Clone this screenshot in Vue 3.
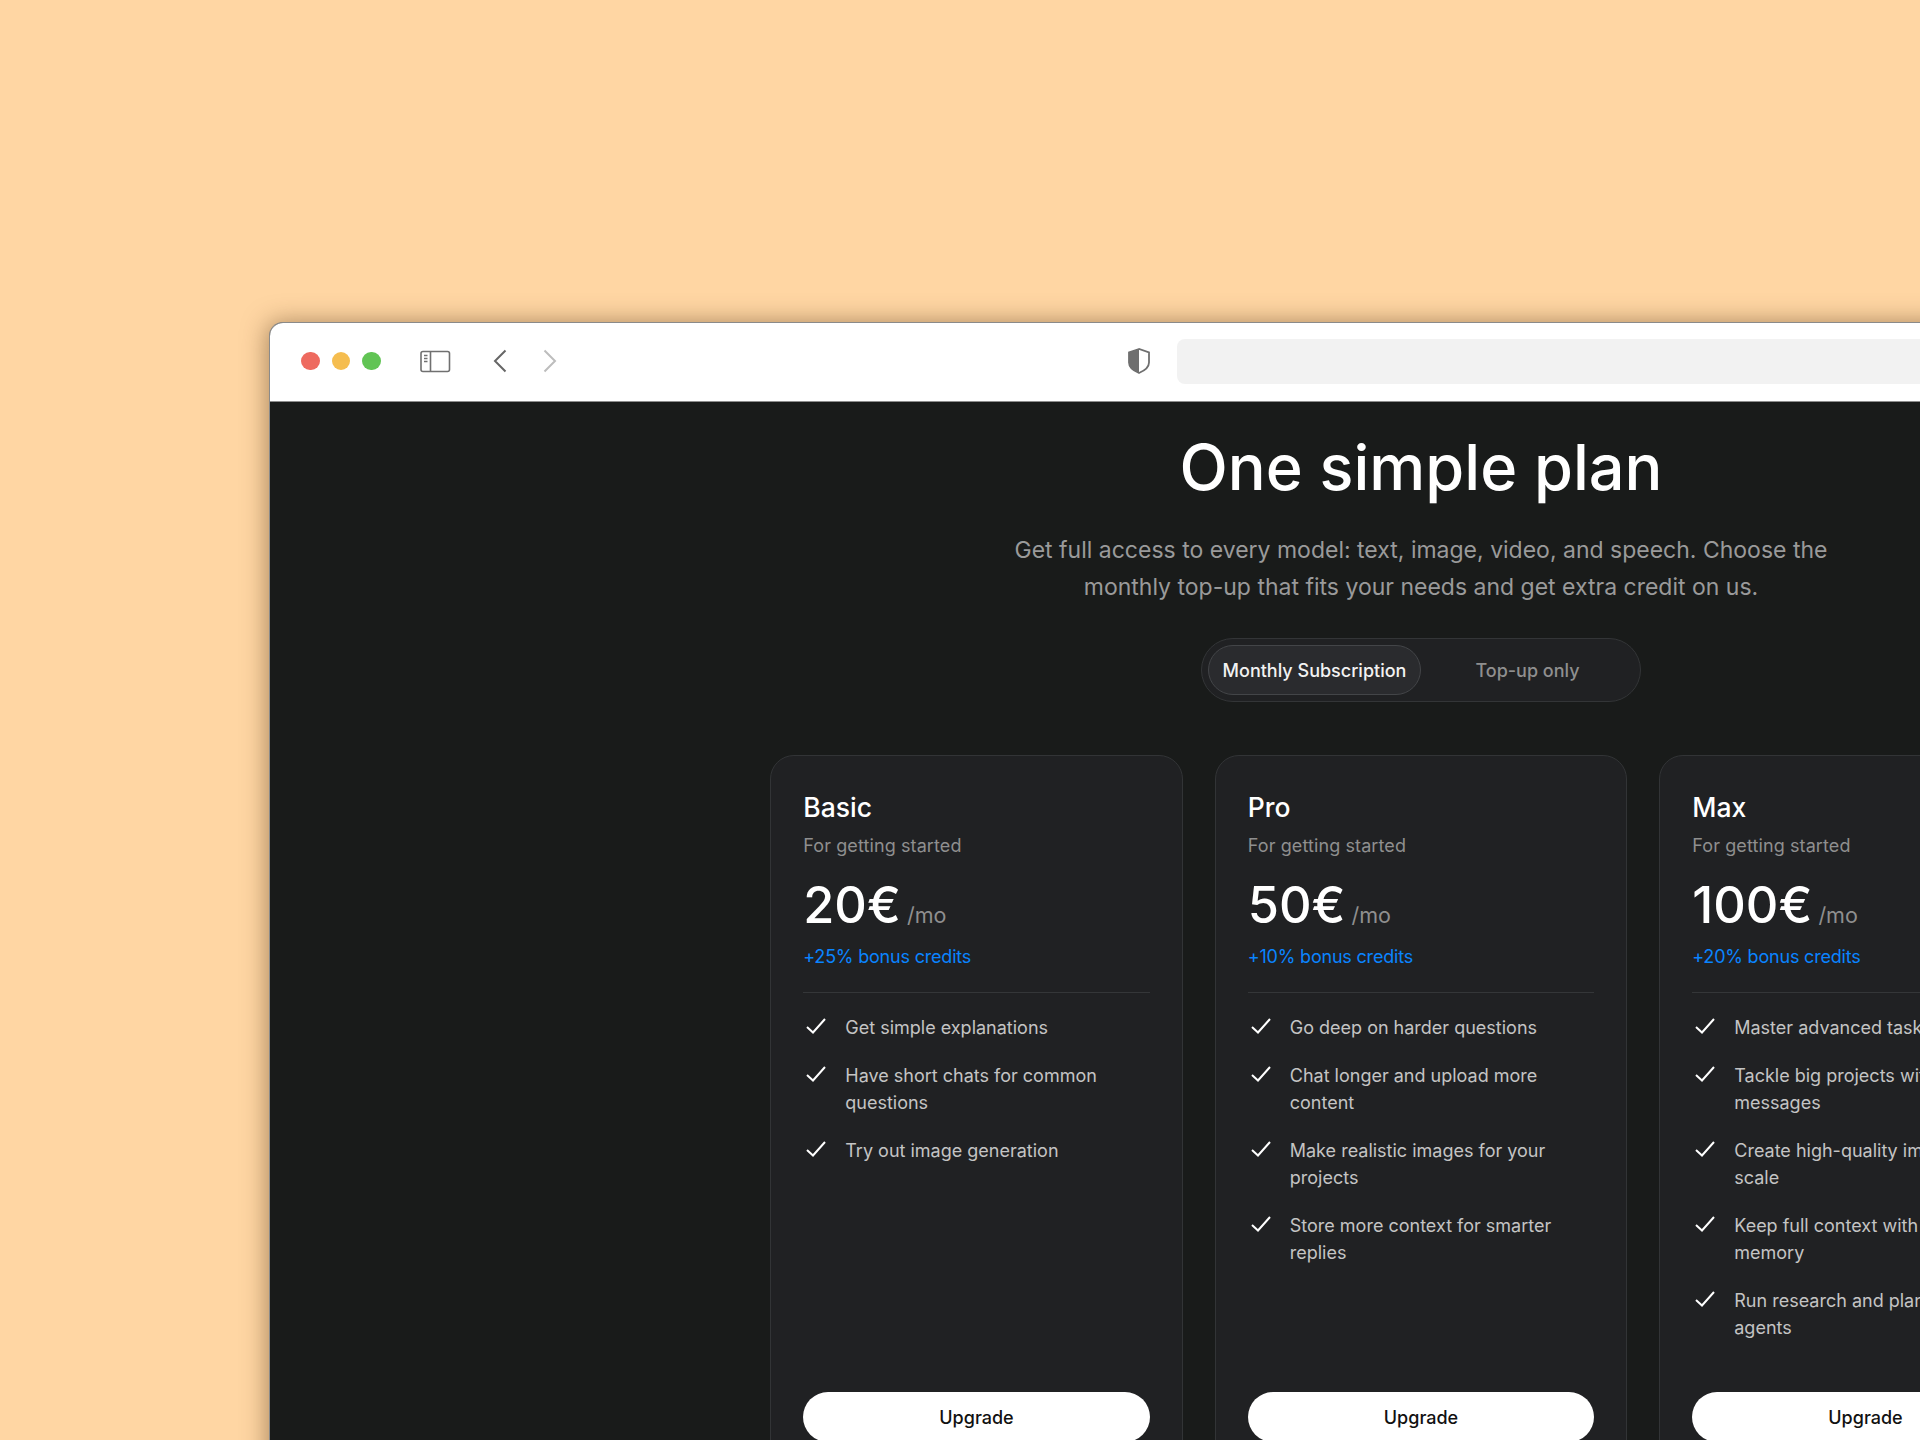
<template>
  <div class="desktop">
    <div class="window">
      <div class="toolbar">
        <div class="lights">
          <span class="light red"></span>
          <span class="light yellow"></span>
          <span class="light green"></span>
        </div>
        <svg class="sidebar-icon" width="31" height="24" viewBox="0 0 31 24" fill="none">
          <rect x="1" y="2.5" width="28.5" height="20" rx="2" stroke="#707070" stroke-width="1.6" />
          <path d="M10.5 2.5v20" stroke="#707070" stroke-width="1.6" />
          <path d="M4 6.5h3.5M4 9.5h3.5M4 12.5h3.5" stroke="#707070" stroke-width="1.3" />
        </svg>
        <svg class="nav-back" width="14" height="24" viewBox="0 0 14 24" fill="none">
          <path d="M12.5 1.5 2 12l10.5 10.5" stroke="#666" stroke-width="2" />
        </svg>
        <svg class="nav-forward" width="14" height="24" viewBox="0 0 14 24" fill="none">
          <path d="M1.5 1.5 12 12 1.5 22.5" stroke="#bdbdbd" stroke-width="2" />
        </svg>
        <svg class="shield" width="22" height="26" viewBox="0 0 22 26" fill="none">
          <path d="M11 1 1 4.5v10c0 4.500 4 8 10 10.500 6-2.500 10-6 10-10.500v-10L11 1Z" fill="#fff" stroke="#6f6f6f" stroke-width="1.800" />
          <path d="M11 1 1 4.500v10c0 4.500 4 8 10 10.500V1Z" fill="#6f6f6f" />
        </svg>
        <div class="address"></div>
      </div>

      <main class="content">
        <h1>One simple plan</h1>
        <p class="lead">
          Get full access to every model: text, image, video, and speech. Choose the<br />
          monthly top-up that fits your needs and get extra credit on us.
        </p>

        <div class="toggle">
          <button class="segment active">Monthly Subscription</button>
          <button class="segment">Top-up only</button>
        </div>

        <div class="plans">
          <section v-for="plan in plans" :key="plan.name" class="card">
            <h2>{{ plan.name }}</h2>
            <p class="tagline">For getting started</p>
            <div class="price">
              <span class="amount">{{ plan.price }}</span>
              <span class="period">/mo</span>
            </div>
            <p class="bonus">{{ plan.bonus }}</p>
            <ul class="features">
              <li v-for="item in plan.features" :key="item">
                <svg class="check" width="20" height="16" viewBox="0 0 20 16" fill="none">
                  <path d="M1 9l6 5.500L19 1" stroke="#fff" stroke-width="2" />
                </svg>
                <span>{{ item }}</span>
              </li>
            </ul>
            <button class="upgrade">Upgrade</button>
          </section>
        </div>
      </main>
    </div>
  </div>
</template>

<script setup>
const plans = [
  {
    name: 'Basic',
    price: '20€',
    bonus: '+25% bonus credits',
    features: ['Get simple explanations', 'Have short chats for common questions', 'Try out image generation'],
  },
  {
    name: 'Pro',
    price: '50€',
    bonus: '+10% bonus credits',
    features: [
      'Go deep on harder questions',
      'Chat longer and upload more content',
      'Make realistic images for your projects',
      'Store more context for smarter replies',
    ],
  },
  {
    name: 'Max',
    price: '100€',
    bonus: '+20% bonus credits',
    features: [
      'Master advanced tasks',
      'Tackle big projects with more messages',
      'Create high-quality images fast at scale',
      'Keep full context with long-term memory',
      'Run research and planning with agents',
    ],
  },
]
</script>

<style>
html,
body {
  margin: 0;
  background: #ffd6a3;
}
</style>

<style scoped>
.desktop {
  width: 1920px;
  height: 1440px;
  padding: 322px 0 0 269px;
  box-sizing: border-box;
  overflow: hidden;
  background: #ffd6a3;
  font-family: Inter, "Liberation Sans", sans-serif;
}

.window {
  width: 2302px;
  border: 1px solid #8a8a8a;
  border-bottom: 0;
  border-radius: 14px 14px 0 0;
  overflow: hidden;
  background: #191b1a;
  box-shadow: -2px 0 24px rgba(90, 60, 30, 0.5);
}

.toolbar {
  display: flex;
  align-items: center;
  height: 79px;
  padding: 0 0 2px 31px;
  box-sizing: border-box;
  background: #fff;
  border-bottom: 1px solid #8d8d8d;
}

.lights {
  display: flex;
  gap: 12px;
  margin-right: 39px;
}

.light {
  width: 18.5px;
  height: 18.5px;
  border-radius: 50%;
}

.red { background: #ee6a5f; }
.yellow { background: #f5bd4f; }
.green { background: #61c454; }

.nav-back {
  margin-left: 42px;
}

.nav-forward {
  margin-left: 36px;
}

.shield {
  margin-left: 571px;
}

.address {
  width: 1100px;
  height: 45px;
  margin-left: 27px;
  border-radius: 8px;
  background: #f2f2f2;
}

.content {
  display: flex;
  flex-direction: column;
  align-items: center;
  height: 1100px;
  padding-top: 27px;
  box-sizing: border-box;
}

h1 {
  margin: 0;
  color: #fff;
  font-size: 63px;
  font-weight: 500;
  line-height: 76px;
}

.lead {
  margin: 27px 0 0;
  color: #9a9a9a;
  font-size: 23px;
  line-height: 37px;
  text-align: center;
}

.toggle {
  display: grid;
  grid-template-columns: 1fr 1fr;
  width: 440px;
  height: 64px;
  margin-top: 32px;
  padding: 6px;
  box-sizing: border-box;
  border: 1px solid #333537;
  border-radius: 32px;
  background: #202123;
}

.segment {
  border: 1px solid transparent;
  border-radius: 25px;
  background: none;
  color: #8f8f8f;
  font: 500 18px Inter, "Liberation Sans", sans-serif;
}

.segment.active {
  border-color: #434548;
  background: #2a2b2e;
  color: #f2f2f2;
}

.plans {
  display: flex;
  gap: 32px;
  margin-top: 53px;
}

.card {
  display: flex;
  flex-direction: column;
  width: 412.5px;
  height: 720px;
  padding: 32px;
  box-sizing: border-box;
  border: 1px solid #323436;
  border-radius: 24px;
  background: #202123;
}

h2 {
  margin: 0;
  color: #fff;
  font-size: 26.500px;
  font-weight: 450;
  line-height: 38px;
}

.tagline {
  margin: 6px 0 0;
  color: #8f8f8f;
  font-size: 18px;
  letter-spacing: 0.1px;
  line-height: 28px;
}

.price {
  display: flex;
  align-items: baseline;
  gap: 6px;
  margin-top: 15px;
}

.amount {
  color: #fff;
  font-size: 50.500px;
  font-weight: 450;
  line-height: 60px;
}

.period {
  color: #8f8f8f;
  font-size: 21.500px;
}

.bonus {
  margin: 8px 0 0;
  padding-bottom: 21px;
  border-bottom: 1px solid #343638;
  color: #0a84ff;
  font-size: 18px;
  letter-spacing: -0.2px;
  line-height: 28px;
}

.features {
  display: flex;
  flex: 1;
  flex-direction: column;
  gap: 21px;
  margin: 21px 0 0;
  padding: 0;
  list-style: none;
  color: #c4c4c4;
  font-size: 18px;
  line-height: 27px;
}

.features li {
  display: flex;
}

.check {
  flex: none;
  margin: 4px 19px 0 3px;
}

.upgrade {
  flex: none;
  height: 50px;
  border: 0;
  border-radius: 25px;
  background: #fff;
  color: #111;
  font: 500 18px Inter, "Liberation Sans", sans-serif;
}
</style>
